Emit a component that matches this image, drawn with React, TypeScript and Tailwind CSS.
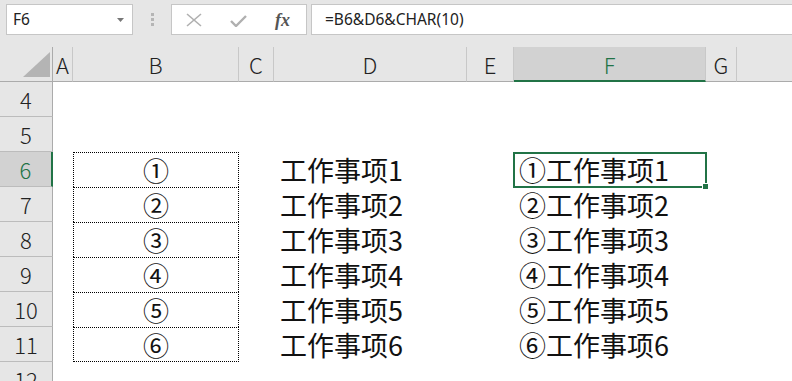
import React from "react";

const cjk = "font-['Noto_Sans_CJK_SC','Noto_Sans_CJK_JP',sans-serif]";
const gridCols = "grid grid-cols-[53px_20px_166px_35px_193px_47px_192px_31px_1fr] grid-rows-[35px]";

const circled = ["①", "②", "③", "④", "⑤", "⑥"];
const letters = ["A", "B", "C", "D", "E", "F", "G"];
const rows = [4, 5, 6, 7, 8, 9, 10, 11, 12];

function Toolbar() {
  return (
    <div className="h-[47px] bg-[#e6e6e6] flex items-start pt-[4px]">
      <div className="ml-[6px] w-[127px] h-[31px] border border-[#c6c6c6] bg-white flex items-center justify-between pl-[6px] pr-[8px]">
        <span className="font-['Noto_Sans',sans-serif] text-[15.5px] text-[#222]">F6</span>
        <svg width="7" height="4" viewBox="0 0 7 4">
          <polygon points="0,0 7,0 3.5,4" fill="#777" />
        </svg>
      </div>
      <div className="w-[38px] h-[31px] flex flex-col items-center justify-center gap-[2px]">
        <span className="w-[3px] h-[3px] bg-[#b5b5b5]" />
        <span className="w-[3px] h-[3px] bg-[#b5b5b5]" />
        <span className="w-[3px] h-[3px] bg-[#b5b5b5]" />
      </div>
      <div className="w-[136px] h-[31px] border border-[#c6c6c6] bg-white flex items-center pl-[14px]">
        <svg width="16" height="14" viewBox="0 0 16 14">
          <line x1="1" y1="1" x2="15" y2="13" stroke="#b0b0b0" strokeWidth="1.6" />
          <line x1="15" y1="1" x2="1" y2="13" stroke="#b0b0b0" strokeWidth="1.6" />
        </svg>
        <svg className="ml-[28px] mt-[2px]" width="17" height="12" viewBox="0 0 17 12">
          <polyline points="1,6 6,11 16,1" fill="none" stroke="#b0b0b0" strokeWidth="2.4" />
        </svg>
        <span className="ml-[28px] font-['Liberation_Serif',serif] italic font-bold text-[18px] text-[#555] leading-none">
          fx
        </span>
      </div>
      <div className="ml-[4px] flex-1 h-[31px] border border-r-0 border-[#c6c6c6] bg-white flex items-center pl-[13px]">
        <span className="font-['Noto_Sans',sans-serif] text-[15.5px] text-[#222]">=B6&amp;D6&amp;CHAR(10)</span>
      </div>
    </div>
  );
}

function HeaderRow() {
  return (
    <div className={`${gridCols} h-[35px] bg-[#e6e6e6] ${cjk} text-[22px] leading-none text-[#222]`}>
      <div className="relative border-r border-b border-[#ababab]">
        <svg className="absolute right-[2px] bottom-[4px]" width="27" height="25" viewBox="0 0 27 25">
          <polygon points="27,0 27,25 0,25" fill="#b4b4b4" />
        </svg>
      </div>
      {letters.map((l) =>
        l === "F" ? (
          <div
            key={l}
            className="flex items-center justify-center bg-[#d2d2d2] border-r border-[#c8c8c8] border-b-2 border-b-[#217346] text-[#217346] font-light"
          >
            {l}
          </div>
        ) : (
          <div
            key={l}
            className="flex items-center justify-center border-r border-[#c8c8c8] border-b border-b-[#ababab] font-light"
          >
            {l}
          </div>
        )
      )}
      <div className="border-b border-[#ababab]" />
    </div>
  );
}

function Row({ r }: { r: number }) {
  const idx = r - 6;
  const filled = idx >= 0 && idx < 6;
  const selected = r === 6;
  return (
    <div className={`${gridCols} h-[35px] ${cjk} leading-none text-[#111]`}>
      <div
        className={
          selected
            ? "flex items-center justify-center bg-[#d2d2d2] border-r-2 border-r-[#217346] border-b border-b-[#bcbcbc] text-[#217346] text-[22px] font-light"
            : "flex items-center justify-center bg-[#e6e6e6] border-r border-r-[#ababab] border-b border-b-[#bcbcbc] text-[#222] text-[22px] font-light"
        }
      >
        {r}
      </div>
      <div />
      {filled ? (
        <div
          className={
            idx === 5
              ? "flex items-center justify-center border border-dotted border-black text-[26px]"
              : "flex items-center justify-center border-l border-r border-t border-dotted border-black text-[26px]"
          }
        >
          {circled[idx]}
        </div>
      ) : (
        <div />
      )}
      <div />
      <div className="flex items-center pl-[6px] text-[27px] whitespace-nowrap">
        {filled ? `工作事项${idx + 1}` : ""}
      </div>
      <div />
      <div className="relative flex items-center pl-[5px] text-[27px] whitespace-nowrap">
        {filled ? `${circled[idx]}工作事项${idx + 1}` : ""}
        {selected && (
          <>
            <div className="absolute -left-[1px] top-0 w-[194px] h-[36px] border-2 border-[#217346]" />
            <div className="absolute right-[-3px] bottom-[-3px] w-[7px] h-[7px] bg-[#217346] border border-white" />
          </>
        )}
      </div>
      <div />
      <div />
    </div>
  );
}

export default function App() {
  return (
    <div className="w-[792px] h-[381px] overflow-hidden bg-white">
      <Toolbar />
      <HeaderRow />
      {rows.map((r) => (
        <Row key={r} r={r} />
      ))}
    </div>
  );
}
